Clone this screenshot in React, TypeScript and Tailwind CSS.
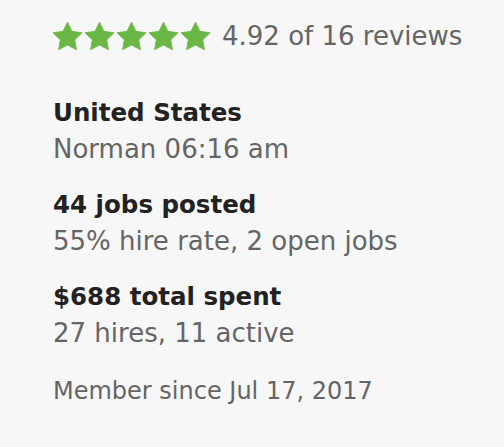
import React from 'react';

const groups = [
  { title: 'United States', sub: 'Norman 06:16 am' },
  { title: '44 jobs posted', sub: '55% hire rate, 2 open jobs' },
  { title: '$688 total spent', sub: '27 hires, 11 active' },
];

function Star() {
  return (
    <svg viewBox="2 2 20 19" width="29" height="28" className="shrink-0">
      <polygon
        points="12 2 15.09 8.26 22 9.27 17 14.14 18.18 21.02 12 17.77 5.82 21.02 7 14.14 2 9.27 8.91 8.26"
        fill="#6bb745"
        stroke="#6bb745"
        strokeWidth="0.6"
        strokeLinejoin="round"
      />
    </svg>
  );
}

export default function App() {
  return (
    <div
      className="w-[504px] h-[447px] bg-[#f7f7f7] pl-[53px] pt-[18px] leading-[36px]"
      style={{ fontFamily: '"DejaVu Sans", "Liberation Sans", sans-serif' }}
    >
      {/* Rating */}
      <div className="flex items-center h-[36px]">
        <div className="flex gap-[3px]">
          {[0, 1, 2, 3, 4].map((i) => (
            <Star key={i} />
          ))}
        </div>
        <span className="ml-[12px] text-[26px] text-[#656565]">4.92 of 16 reviews</span>
      </div>

      <div className="mt-[41px] flex flex-col gap-[20px]">
        {groups.map((g) => (
          <div key={g.title}>
            <div className="text-[24.5px] font-bold text-[#222222]">{g.title}</div>
            <div className="text-[26px] text-[#656565]">{g.sub}</div>
          </div>
        ))}
        <div className="mt-[2px] text-[24px] text-[#656565]">Member since Jul 17, 2017</div>
      </div>
    </div>
  );
}
